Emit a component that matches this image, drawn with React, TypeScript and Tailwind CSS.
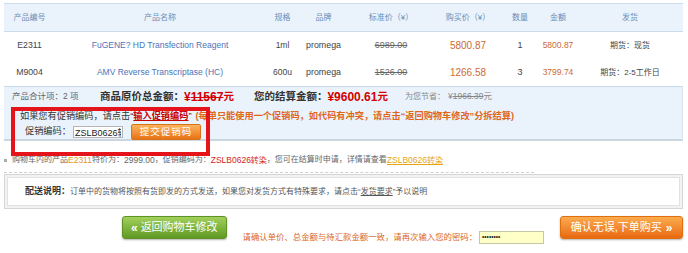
import React from "react";

const W = ["w-[51px]", "w-[210px]", "w-[35px]", "w-[47px]", "w-[88px]", "w-[66px]", "w-[38px]", "w-[38px]", "w-[106px]"];

function Row({ code, name, spec, std, buy, qty, amt, ship }: { code: string; name: string; spec: string; std: string; buy: string; qty: string; amt: string; ship: string }) {
  return (
    <div className="flex h-[27px] items-center text-[#444]">
      <div className={`${W[0]} text-center text-[8.7px]`}>{code}</div>
      <div className={`${W[1]} text-center text-[8.5px] text-[#4a74b8]`}>{name}</div>
      <div className={`${W[2]} text-center text-[8.5px]`}>{spec}</div>
      <div className={`${W[3]} text-center text-[8.9px]`}>{brand}</div>
      <div className={`${W[4]} text-center text-[9px] text-[#666] line-through`}>{std}</div>
      <div className={`${W[5]} text-center text-[10px] text-[#cd6a35]`}>{buy}</div>
      <div className={`${W[6]} text-center text-[9px]`}>{qty}</div>
      <div className={`${W[7]} text-center text-[8.5px] text-[#cd6a35]`}>{amt}</div>
      <div className={`${W[8]} text-center text-[8px]`}>{ship}</div>
    </div>
  );
}
const brand = "promega";

export default function App() {
  return (
    <div className="relative w-[688px] h-[253px] overflow-hidden bg-white pt-[3px] pl-[4px] font-['Liberation_Sans','Noto_Sans_CJK_SC',sans-serif] text-[#444]">
      <div className="w-[679px]">
        {/* header */}
        <div className="flex h-[29px] items-center border-y border-[#cddcea] bg-[#eaf3fb] text-[8px] text-[#6a8db6]">
          <div className={`${W[0]} text-center`}>产品编号</div>
          <div className={`${W[1]} text-center`}>产品名称</div>
          <div className={`${W[2]} text-center`}>规格</div>
          <div className={`${W[3]} text-center`}>品牌</div>
          <div className={`${W[4]} text-center`}>标准价（¥）</div>
          <div className={`${W[5]} text-center`}>购买价（¥）</div>
          <div className={`${W[6]} text-center`}>数量</div>
          <div className={`${W[7]} text-center`}>金额</div>
          <div className={`${W[8]} text-center`}>发货</div>
        </div>
        <Row code="E2311" name="FuGENE? HD Transfection Reagent" spec="1ml" std="6989.00" buy="5800.87" qty="1" amt="5800.87" ship="期货：现货" />
        <Row code="M9004" name="AMV Reverse Transcriptase (HC)" spec="600u" std="1526.00" buy="1266.58" qty="3" amt="3799.74" ship="期货：2-5工作日" />

        {/* summary */}
        <div className="h-[55px] border-t border-[#c9d9e8] border-b-2 border-b-[#cbd6df] border-r border-r-[#d9e4ee] bg-[#eaf3fc]">
          <div className="flex h-[19px] items-center pl-[8px]">
            <span className="w-[88px] text-[8.5px] text-[#666]">产品合计项：2 项</span>
            <span className="text-[10.5px] font-bold text-[#333]">商品原价总金额：</span>
            <span className="text-[12px] font-bold text-[#d40000]">¥<span className="line-through">11567</span></span>
            <span className="text-[10.5px] font-bold text-[#d40000]">元</span>
            <span className="ml-[20px] text-[10.5px] font-bold text-[#333]">您的结算金额：</span>
            <span className="text-[12px] font-bold text-[#d40000]">¥9600.61</span>
            <span className="text-[10.5px] font-bold text-[#d40000]">元</span>
            <span className="ml-[17px] text-[8px] text-[#888]">为您节省：</span>
            <span className="ml-[3px] text-[8.5px] text-[#888]">¥<span className="line-through">1966.39</span>元</span>
          </div>
          <div className="mt-[4px] flex h-[14px] items-center pl-[16px] text-[9.2px] whitespace-nowrap">
            <span className="text-[#333]">如果您有促销编码，请点击“</span>
            <span className="font-bold text-[#c80000] underline">输入促销编码</span>
            <span className="text-[#333]">”</span>
            <span className="ml-[4px] font-bold text-[#e0661a]">(每单只能使用一个促销码，如代码有冲突，请点击“返回购物车修改”分拆结算)</span>
          </div>
          <div className="flex h-[16px] items-center pl-[21px] text-[9.2px]">
            <span className="text-[#333]">促销编码：</span>
            <input
              readOnly
              value="ZSLB0626转染"
              className="ml-[2px] h-[12px] w-[50px] border border-[#b5b5b5] bg-white px-[1px] py-0 text-[9px] leading-none text-[#222] outline-none font-['Liberation_Sans','Noto_Sans_CJK_SC',sans-serif]"
            />
            <div className="ml-[8px] flex h-[16px] w-[70px] items-center justify-center rounded-[2px] border border-[#d9731a] bg-gradient-to-b from-[#fbb45a] to-[#e8720f] text-[9.5px] tracking-[1px] text-white">提交促销码</div>
          </div>
        </div>

        {/* bullet note */}
        <div className="mt-[12px] flex h-[14px] items-center whitespace-nowrap text-[8px] text-[#666]">
          <span className="mr-[4px] inline-block h-[3px] w-[3px] bg-[#aaa]"></span>
          <span className="ml-[1px]">购物车内的产品</span>
          <span className="text-[8.5px] text-[#e8952a]">E2311</span>
          <span>特价为：</span>
          <span className="text-[8.5px]">2999.00</span>
          <span>，促销编码为：</span>
          <span className="text-[#d42424]"><span className="text-[8.5px]">ZSLB0626</span>转染</span>
          <span>，您可在结算时申请，详情请查看</span>
          <span className="text-[#e8a317] underline"><span className="text-[8.5px]">ZSLB0626</span>转染</span>
        </div>
        <div className="mt-[5px] w-[530px] border-t border-dashed border-[#cfcfcf]"></div>

        {/* delivery */}
        <div className="mt-[1px] h-[35px] border border-[#d6d6d6] bg-[#f2f2f2] p-[2px]">
          <div className="flex h-full items-center border border-[#e2e2e2] bg-white pl-[17px] whitespace-nowrap">
            <span className="text-[9px] font-bold text-[#333]">配送说明：</span>
            <span className="text-[8px] text-[#555]">订单中的货物将按照有货即发的方式发送，如果您对发货方式有特殊要求，请点击“<span className="underline">发货要求</span>”予以说明</span>
          </div>
        </div>

        {/* actions */}
        <div className="mt-[7px] flex items-start">
          <div className="ml-[118px] flex h-[23px] w-[108px] items-center justify-center rounded-[3px] border border-[#5e9224] bg-gradient-to-b from-[#a2d05a] to-[#5f9a22] text-[11px] text-white shadow-[0_1px_2px_rgba(0,0,0,0.3)]">
            <span className="mr-[3px] text-[12px] font-bold">«</span>返回购物车修改
          </div>
          <div className="ml-[16px] mt-[15px] flex items-center">
            <span className="text-[8.4px] text-[#d9672a] whitespace-nowrap">请确认单价、总金额与待汇款金额一致，请再次输入您的密码：</span>
            <div className="ml-[2px] flex h-[13px] w-[65px] items-center border border-[#c8c8a0] bg-[#ffffc8] pl-[2px] text-[6.5px] leading-none text-[#222]">••••••••</div>
          </div>
          <div className="ml-[16px] flex h-[23px] w-[127px] items-center justify-center rounded-[3px] border border-[#e0700f] bg-gradient-to-b from-[#fbab4c] to-[#e8690c] text-[11px] text-white shadow-[0_1px_2px_rgba(0,0,0,0.3)]">
            确认无误,下单购买<span className="ml-[4px] text-[12px] font-bold">»</span>
          </div>
        </div>
      </div>

      {/* red annotation box */}
      <div className="absolute left-[11px] top-[107px] h-[49px] w-[199px] border-4 border-[#e5141b]"></div>
    </div>
  );
}
